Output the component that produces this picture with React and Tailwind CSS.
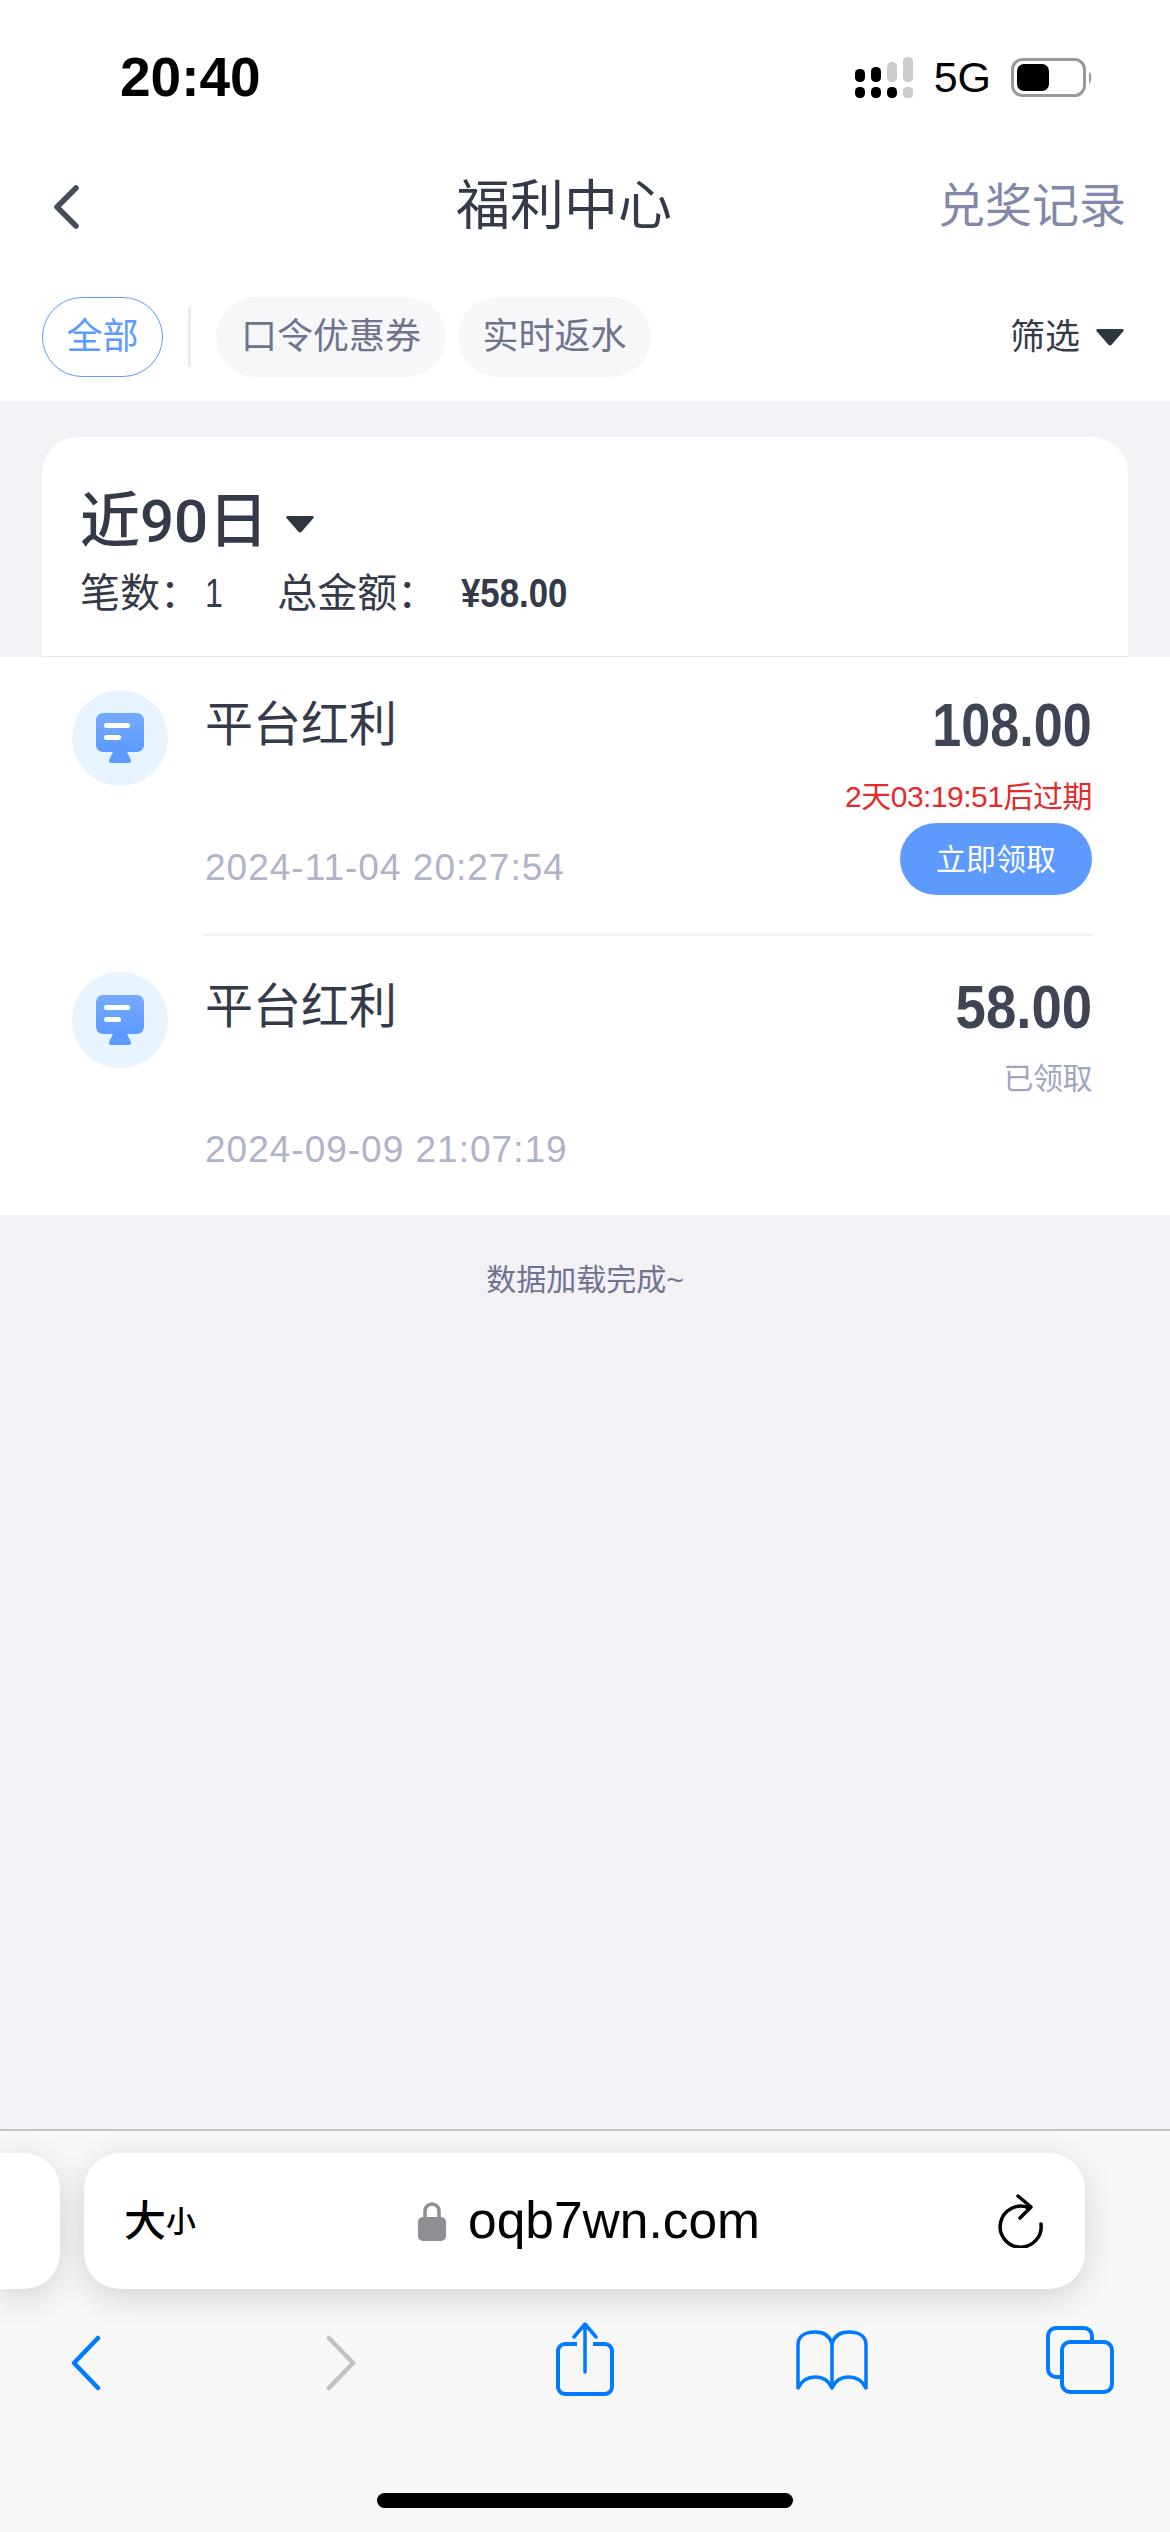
import React from 'react';

const FONT = "font-['Liberation_Sans','Noto_Sans_CJK_SC',sans-serif]";

const Caret = ({ className }) => (
  <svg viewBox="0 0 28 17" className={className}>
    <path d="M2 0h24q2.500 0 1.300 2.200L15.800 15.600q-1.800 2-3.600 0L.7 2.200Q-.5 0 2 0z" fill="#2f363f" />
  </svg>
);

const Signal = () => (
  <svg width="58" height="42" viewBox="0 0 58 42">
    <rect x="0" y="12" width="10" height="13" rx="4.500" fill="#000" />
    <rect x="16" y="10" width="10" height="15" rx="4.500" fill="#000" />
    <rect x="32" y="5" width="10" height="20" rx="4.500" fill="#ccc" />
    <rect x="48" y="0" width="10" height="25" rx="4.500" fill="#ccc" />
    <rect x="0" y="30" width="10" height="11" rx="4.500" fill="#000" />
    <rect x="16" y="30" width="10" height="11" rx="4.500" fill="#000" />
    <rect x="32" y="30" width="10" height="11" rx="4.500" fill="#000" />
    <rect x="48" y="30" width="10" height="11" rx="4" fill="#ccc" />
  </svg>
);

const Battery = () => (
  <svg width="82" height="40" viewBox="0 0 82 40">
    <rect x="1.500" y="1.500" width="72" height="36" rx="10" fill="none" stroke="#999" strokeWidth="3" />
    <rect x="6" y="6" width="32" height="27" rx="7" fill="#000" />
    <path d="M78 14c3 1 3 10 0 12z" fill="#999" />
  </svg>
);

const PlatformIcon = () => (
  <div className="w-[96px] h-[96px] rounded-full bg-[#e7f4ff] flex items-center justify-center shrink-0">
    <svg width="48" height="50" viewBox="0 0 48 50">
      <defs>
        <linearGradient id="screen" x1="0" y1="0" x2="0" y2="1">
          <stop offset="0" stopColor="#76aaff" />
          <stop offset="1" stopColor="#5c9aff" />
        </linearGradient>
      </defs>
      <rect x="0" y="0" width="48" height="39" rx="7" fill="url(#screen)" />
      <path d="M13 47l4-8h14l4 8q0 3-2 3H15q-2 0-2-3z" fill="#5c9aff" />
      <rect x="8" y="10" width="26" height="5" rx="2.500" fill="#fff" />
      <rect x="8" y="22" width="17" height="5" rx="2.500" fill="#fff" />
    </svg>
  </div>
);

const Row = ({ amount, amountClass, date, status, action, statusClass }) => (
  <div className="flex items-start h-[276px] pl-[72px] pr-[78px] pt-[33px]">
    <PlatformIcon />
    <div className="flex-1 flex justify-between ml-[37px]">
      <div className="flex flex-col justify-between h-[200px]">
        <div className="text-[48px] leading-[70px] text-[#343a4a]">平台红利</div>
        <div className="text-[37px] leading-[44px] tracking-[1px] text-[#b0b3c9]">{date}</div>
      </div>
      <div className="flex flex-col items-end">
        <div className={`text-[62px] leading-[72px] -mt-[1px] font-bold text-[#3f4554] origin-right ${amountClass}`}>{amount}</div>
        <div className={`text-[30px] leading-[40px] mt-[16px] tracking-[-0.5px] ${statusClass}`}>{status}</div>
        {action && (
          <div className="mt-[6px] w-[192px] h-[72px] rounded-full bg-[#5c9aff] flex items-center justify-center text-[30px] text-white">
            {action}
          </div>
        )}
      </div>
    </div>
  </div>
);

export default function App() {
  return (
    <div className={`${FONT} w-[1170px] h-[2532px] bg-[#f1f1f6] flex flex-col overflow-hidden`}>
      {/* status bar */}
      <div className="bg-white h-[150px] flex items-center justify-between pl-[120px] pr-[77px] pt-[5px] shrink-0">
        <span className="text-[55px] font-bold text-black">20:40</span>
        <div className="flex items-center">
          <Signal />
          <span className="text-[43px] text-black ml-[21px] mr-[20px]">5G</span>
          <Battery />
        </div>
      </div>

      {/* nav */}
      <div className="bg-white h-[113px] flex items-center justify-between pl-[53px] pr-[44px] relative shrink-0">
        <svg width="26" height="44" viewBox="0 0 26 44">
          <path d="M23 3L4 22l19 19" fill="none" stroke="#454b5a" strokeWidth="5.500" strokeLinecap="round" strokeLinejoin="round" />
        </svg>
        <span className="absolute left-[456px] text-[54px] text-[#343a4a]">福利中心</span>
        <span className="text-[47px] text-[#8388ab]">兑奖记录</span>
      </div>

      {/* tabs */}
      <div className="bg-white h-[138px] flex items-start justify-between pl-[42px] pr-[46px] pt-[34px] shrink-0">
        <div className="flex items-center">
          <div className="w-[121px] h-[80px] rounded-full border border-[#5c9aff] text-[#5c9aff] text-[36px] flex items-center justify-center">全部</div>
          <div className="w-[3px] h-[60px] bg-[#e9ebf0] mx-[25px]" />
          <div className="w-[230px] h-[80px] rounded-full bg-[#f6f7f9] text-[#6f7390] text-[36px] flex items-center justify-center">口令优惠券</div>
          <div className="w-[193px] h-[80px] rounded-full bg-[#f6f7f9] text-[#6f7390] text-[36px] flex items-center justify-center ml-[12px]">实时返水</div>
        </div>
        <div className="flex items-center h-[80px] text-[35px] text-[#343a4a]">
          筛选
          <Caret className="w-[28px] h-[17px] ml-[16px]" />
        </div>
      </div>

      {/* summary card */}
      <div className="mx-[42px] mt-[36px] h-[220px] bg-white rounded-t-[36px] border-b border-[#e6e6ec] pl-[38px] pt-[49px] shrink-0">
        <div className="flex items-center text-[60px] leading-[72px] text-[#343a4a] font-medium">
          近<span className="font-['Roboto']">90</span>日
          <Caret className="w-[28px] h-[17px] ml-[18px] mt-[4px]" />
        </div>
        <div className="flex items-center text-[40px] leading-[50px] mt-[10px] text-[#343a4a]">
          <span>笔数：</span>
          <span className="ml-[5px] scale-x-[0.8] origin-left">1</span>
          <span className="ml-[50px]">总金额：</span>
          <span className="font-bold ml-[24px] scale-x-[0.87] origin-left">¥58.00</span>
        </div>
      </div>

      {/* records */}
      <div className="bg-white h-[558px] shrink-0">
        <Row amount="108.00" amountClass="scale-x-[0.84]" date="2024-11-04 20:27:54" status="2天03:19:51后过期" action="立即领取" statusClass="text-[#e52a2a]" />
        <div className="h-[3px] bg-[#f1f1f6] ml-[204px] mr-[78px] mb-[3px]" />
        <Row amount="58.00" amountClass="scale-x-[0.88]" date="2024-09-09 21:07:19" status="已领取" statusClass="text-[#a1a5c0]" />
      </div>
      <div className="text-center text-[30px] leading-[40px] text-[#6f7390] mt-[45px]">数据加载完成~</div>

      {/* safari bar */}
      <div className="mt-auto h-[403px] bg-[#f7f7f8] border-t-2 border-[#c4c4c4] shrink-0 flex flex-col">
        <div className="flex items-start pt-[22px]">
          <div className="w-[60px] h-[136px] bg-white rounded-r-[36px] shadow-[0_8px_32px_rgba(0,0,0,0.14)] shrink-0" />
          <div className="ml-[24px] w-[1001px] h-[136px] bg-white rounded-[36px] shadow-[0_8px_32px_rgba(0,0,0,0.14)] flex items-center pl-[40px] pr-[41px] relative">
            <span className="text-[42px] font-medium text-black">大</span>
            <span className="text-[30px] font-medium text-black">小</span>
            <div className="absolute left-[334px] flex items-center">
              <svg width="28" height="40" viewBox="0 0 28 40" className="mr-[22px]">
                <path d="M7 18V10a7 7 0 0 1 14 0v8" fill="none" stroke="#8e8e93" strokeWidth="3.500" />
                <rect x="0" y="16" width="28" height="24" rx="5" fill="#8e8e93" />
              </svg>
              <span className="text-[51.500px] text-black">oqb7wn.com</span>
            </div>
            <svg width="46" height="54" viewBox="0 0 46 54" className="ml-auto">
              <path d="M30 13.500A20.500 20.500 0 1 0 43 30" fill="none" stroke="#000" strokeWidth="3.500" strokeLinecap="round" />
              <path d="M20 2l13 11-11 11" fill="none" stroke="#000" strokeWidth="3.500" strokeLinecap="round" strokeLinejoin="round" />
            </svg>
          </div>
        </div>
        <div className="relative h-[100px] mt-[33px]">
          <svg width="34" height="56" viewBox="0 0 34 56" className="absolute left-[69px] top-[13px]">
            <path d="M29 3L5 28l24 25" fill="none" stroke="#007aff" strokeWidth="4.500" strokeLinecap="round" strokeLinejoin="round" />
          </svg>
          <svg width="34" height="56" viewBox="0 0 34 56" className="absolute left-[324px] top-[13px]">
            <path d="M5 3l24 25L5 53" fill="none" stroke="#c2c2c2" strokeWidth="4.500" strokeLinecap="round" strokeLinejoin="round" />
          </svg>
          <svg width="58" height="74" viewBox="0 0 58 74" className="absolute left-[556px] top-[0px]">
            <path d="M21 22H9a7 7 0 0 0-7 7v36a7 7 0 0 0 7 7h40a7 7 0 0 0 7-7V29a7 7 0 0 0-7-7H37" fill="none" stroke="#007aff" strokeWidth="4" />
            <path d="M29 50V3M18 15L29 2l11 13" fill="none" stroke="#007aff" strokeWidth="3.500" strokeLinecap="round" strokeLinejoin="round" />
          </svg>
          <svg width="72" height="60" viewBox="0 0 72 60" className="absolute left-[796px] top-[8px]">
            <path d="M36 14C34 6 28 2 19 2 8 2 2 7 2 15V58C6 50 12 47 19 47 27 47 33 51 36 58 39 51 45 47 53 47 60 47 66 50 70 58V15C70 7 64 2 53 2 44 2 38 6 36 14zM36 14V58" fill="none" stroke="#007aff" strokeWidth="3.500" strokeLinejoin="round" />
          </svg>
          <svg width="68" height="68" viewBox="0 0 68 68" className="absolute left-[1046px] top-[4px]">
            <path d="M14 51H10a8 8 0 0 1-8-8V10a8 8 0 0 1 8-8h28a8 8 0 0 1 8 8v4" fill="none" stroke="#007aff" strokeWidth="4" />
            <rect x="16" y="16" width="50" height="50" rx="8" fill="none" stroke="#007aff" strokeWidth="4" />
          </svg>
        </div>
        <div className="mt-auto mb-[24px] mx-auto w-[416px] h-[15px] rounded-full bg-black" />
      </div>
    </div>
  );
}
